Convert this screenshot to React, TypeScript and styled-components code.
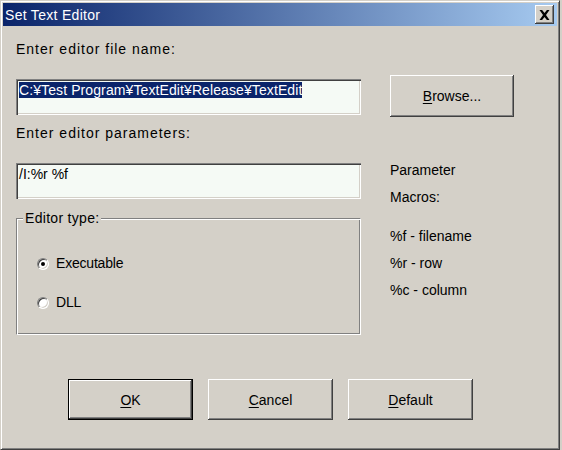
import React from "react";
import styled, { createGlobalStyle } from "styled-components";

const GlobalStyle = createGlobalStyle`
	html, body {
		margin: 0;
		padding: 0;
		background: #d4d0c8;
	}
	body {
		font-family: "Liberation Sans", Arial, sans-serif;
		font-size: 14px;
		color: #000;
	}
`;

const Window = styled.div`
	width: 560px;
	height: 450px;
	box-sizing: border-box;
	background: #d4d0c8;
	border: 1px solid;
	border-color: #d4d0c8 #404040 #404040 #d4d0c8;
	box-shadow: inset 1px 1px #fff, inset -1px -1px #808080;
	padding: 2px;
	display: flex;
	flex-direction: column;
`;

const TitleBar = styled.div`
	height: 23px;
	display: flex;
	align-items: center;
	padding: 0 3px 0 2px;
	background: linear-gradient(to right, #0a246a, #a6caf0);
	color: #fff;
	font-size: 14px;
`;

const Title = styled.span`
	flex: 1;
	letter-spacing: 0.3px;
`;

const CloseButton = styled.button`
	width: 19px;
	height: 19px;
	padding: 0;
	display: flex;
	align-items: center;
	justify-content: center;
	background: #d4d0c8;
	border: none;
	box-shadow: inset -1px -1px #404040, inset 1px 1px #fff,
		inset -2px -2px #808080, inset 2px 2px #d4d0c8;
`;

const Body = styled.div`
	flex: 1;
	display: flex;
	flex-direction: column;
	padding: 0 0 0 13px;
`;

const Row = styled.div<{ $top: number }>`
	display: flex;
	align-items: flex-start;
	margin-top: ${(p) => p.$top}px;
`;

const LeftCol = styled.div`
	width: 345px;
	flex-shrink: 0;
`;

const RightCol = styled.div`
	margin-left: 29px;
	display: flex;
	flex-direction: column;
	gap: 12px;
`;

const Label = styled.div<{ $spaced?: boolean }>`
	line-height: 15px;
	height: 15px;
	white-space: nowrap;
	letter-spacing: ${(p) => (p.$spaced ? "1px" : "normal")};
`;

const Field = styled.div<{ $offset?: number }>`
	box-sizing: border-box;
	width: 345px;
	height: 36px;
	margin-top: ${(p) => p.$offset ?? 0}px;
	padding: 4px 3px;
	background: #f5faf5;
	box-shadow: inset 1px 1px #808080, inset 2px 2px #404040,
		inset -1px -1px #fff, inset -2px -2px #d4d0c8;
	line-height: 14px;
	white-space: nowrap;
	overflow: hidden;
`;

const Selected = styled.span`
	background: #0a246a;
	color: #fff;
	letter-spacing: 0.1px;
`;

const Button = styled.button<{ $default?: boolean }>`
	box-sizing: border-box;
	width: 125px;
	height: 41px;
	padding: 0;
	font-family: "Liberation Sans", Arial, sans-serif;
	font-size: 14px;
	color: #000;
	background: #d4d0c8;
	border: ${(p) => (p.$default ? "1px solid #000" : "none")};
	box-shadow: inset -1px -1px #404040, inset 1px 1px #fff,
		inset -2px -2px #808080, inset 2px 2px #d4d0c8;
	u {
		text-decoration: underline;
		text-underline-offset: 2px;
	}
`;

const BrowseButton = styled(Button)`
	width: 124px;
	height: 42px;
`;

const GroupBox = styled.div`
	position: relative;
	box-sizing: border-box;
	width: 345px;
	height: 117px;
	border: 1px solid #808080;
	border-right-color: #fff;
	border-bottom-color: #fff;
	box-shadow: inset 1px 1px #fff, inset -1px -1px #808080;
	padding: 37px 0 0 20px;
	display: flex;
	flex-direction: column;
	gap: 24px;
`;

const Legend = styled.span`
	position: absolute;
	top: -8px;
	left: 6px;
	padding: 0 2px;
	background: #d4d0c8;
	line-height: 15px;
	letter-spacing: 0.3px;
`;

const RadioRow = styled.label`
	display: flex;
	align-items: center;
	gap: 7px;
	height: 15px;
	line-height: 15px;
	letter-spacing: -0.2px;
`;

const RadioCircle = styled.span<{ $checked?: boolean }>`
	position: relative;
	box-sizing: border-box;
	width: 12px;
	height: 12px;
	border-radius: 50%;
	background: #fff;
	border: 1px solid;
	border-color: #808080 #fff #fff #808080;
	box-shadow: inset 1px 1px #404040, inset -1px -1px #d4d0c8;
	&::after {
		content: "";
		display: ${(p) => (p.$checked ? "block" : "none")};
		position: absolute;
		left: 3px;
		top: 3px;
		width: 4px;
		height: 4px;
		border-radius: 50%;
		background: #000;
	}
`;

const MacroList = styled.div`
	margin-top: 11px;
	display: flex;
	flex-direction: column;
	gap: 12px;
`;

const ButtonRow = styled.div`
	display: flex;
	gap: 15px;
	margin: 44px 0 0 52px;
`;

export default function App() {
	return (
		<>
			<GlobalStyle />
			<Window>
				<TitleBar>
					<Title>Set Text Editor</Title>
					<CloseButton aria-label="Close">
						<svg width="11" height="10" viewBox="0 0 11 10">
							<path
								d="M0.5 0h2.6L5.5 3 7.9 0h2.6L7 5l3.5 5H7.9L5.5 7 3.1 10H0.5L4 5z"
								fill="#000"
							/>
						</svg>
					</CloseButton>
				</TitleBar>
				<Body>
					<Row $top={16}>
						<Label $spaced>Enter editor file name:</Label>
					</Row>
					<Row $top={18}>
						<LeftCol>
							<Field $offset={4}>
								<Selected>C:¥Test Program¥TextEdit¥Release¥TextEdit</Selected>
							</Field>
						</LeftCol>
						<RightCol>
							<BrowseButton>
								<u>B</u>rowse...
							</BrowseButton>
						</RightCol>
					</Row>
					<Row $top={9}>
						<Label $spaced>Enter editor parameters:</Label>
					</Row>
					<Row $top={22}>
						<LeftCol>
							<Field>/I:%r %f</Field>
						</LeftCol>
						<RightCol>
							<Label>Parameter</Label>
							<Label>Macros:</Label>
						</RightCol>
					</Row>
					<Row $top={13}>
						<LeftCol>
							<GroupBox>
								<Legend>Editor type:</Legend>
								<RadioRow>
									<RadioCircle $checked />
									Executable
								</RadioRow>
								<RadioRow>
									<RadioCircle />
									DLL
								</RadioRow>
							</GroupBox>
						</LeftCol>
						<RightCol>
							<MacroList>
								<Label>%f - filename</Label>
								<Label>%r - row</Label>
								<Label>%c - column</Label>
							</MacroList>
						</RightCol>
					</Row>
					<ButtonRow>
						<Button $default>
							<u>O</u>K
						</Button>
						<Button>
							<u>C</u>ancel
						</Button>
						<Button>
							<u>D</u>efault
						</Button>
					</ButtonRow>
				</Body>
			</Window>
		</>
	);
}
